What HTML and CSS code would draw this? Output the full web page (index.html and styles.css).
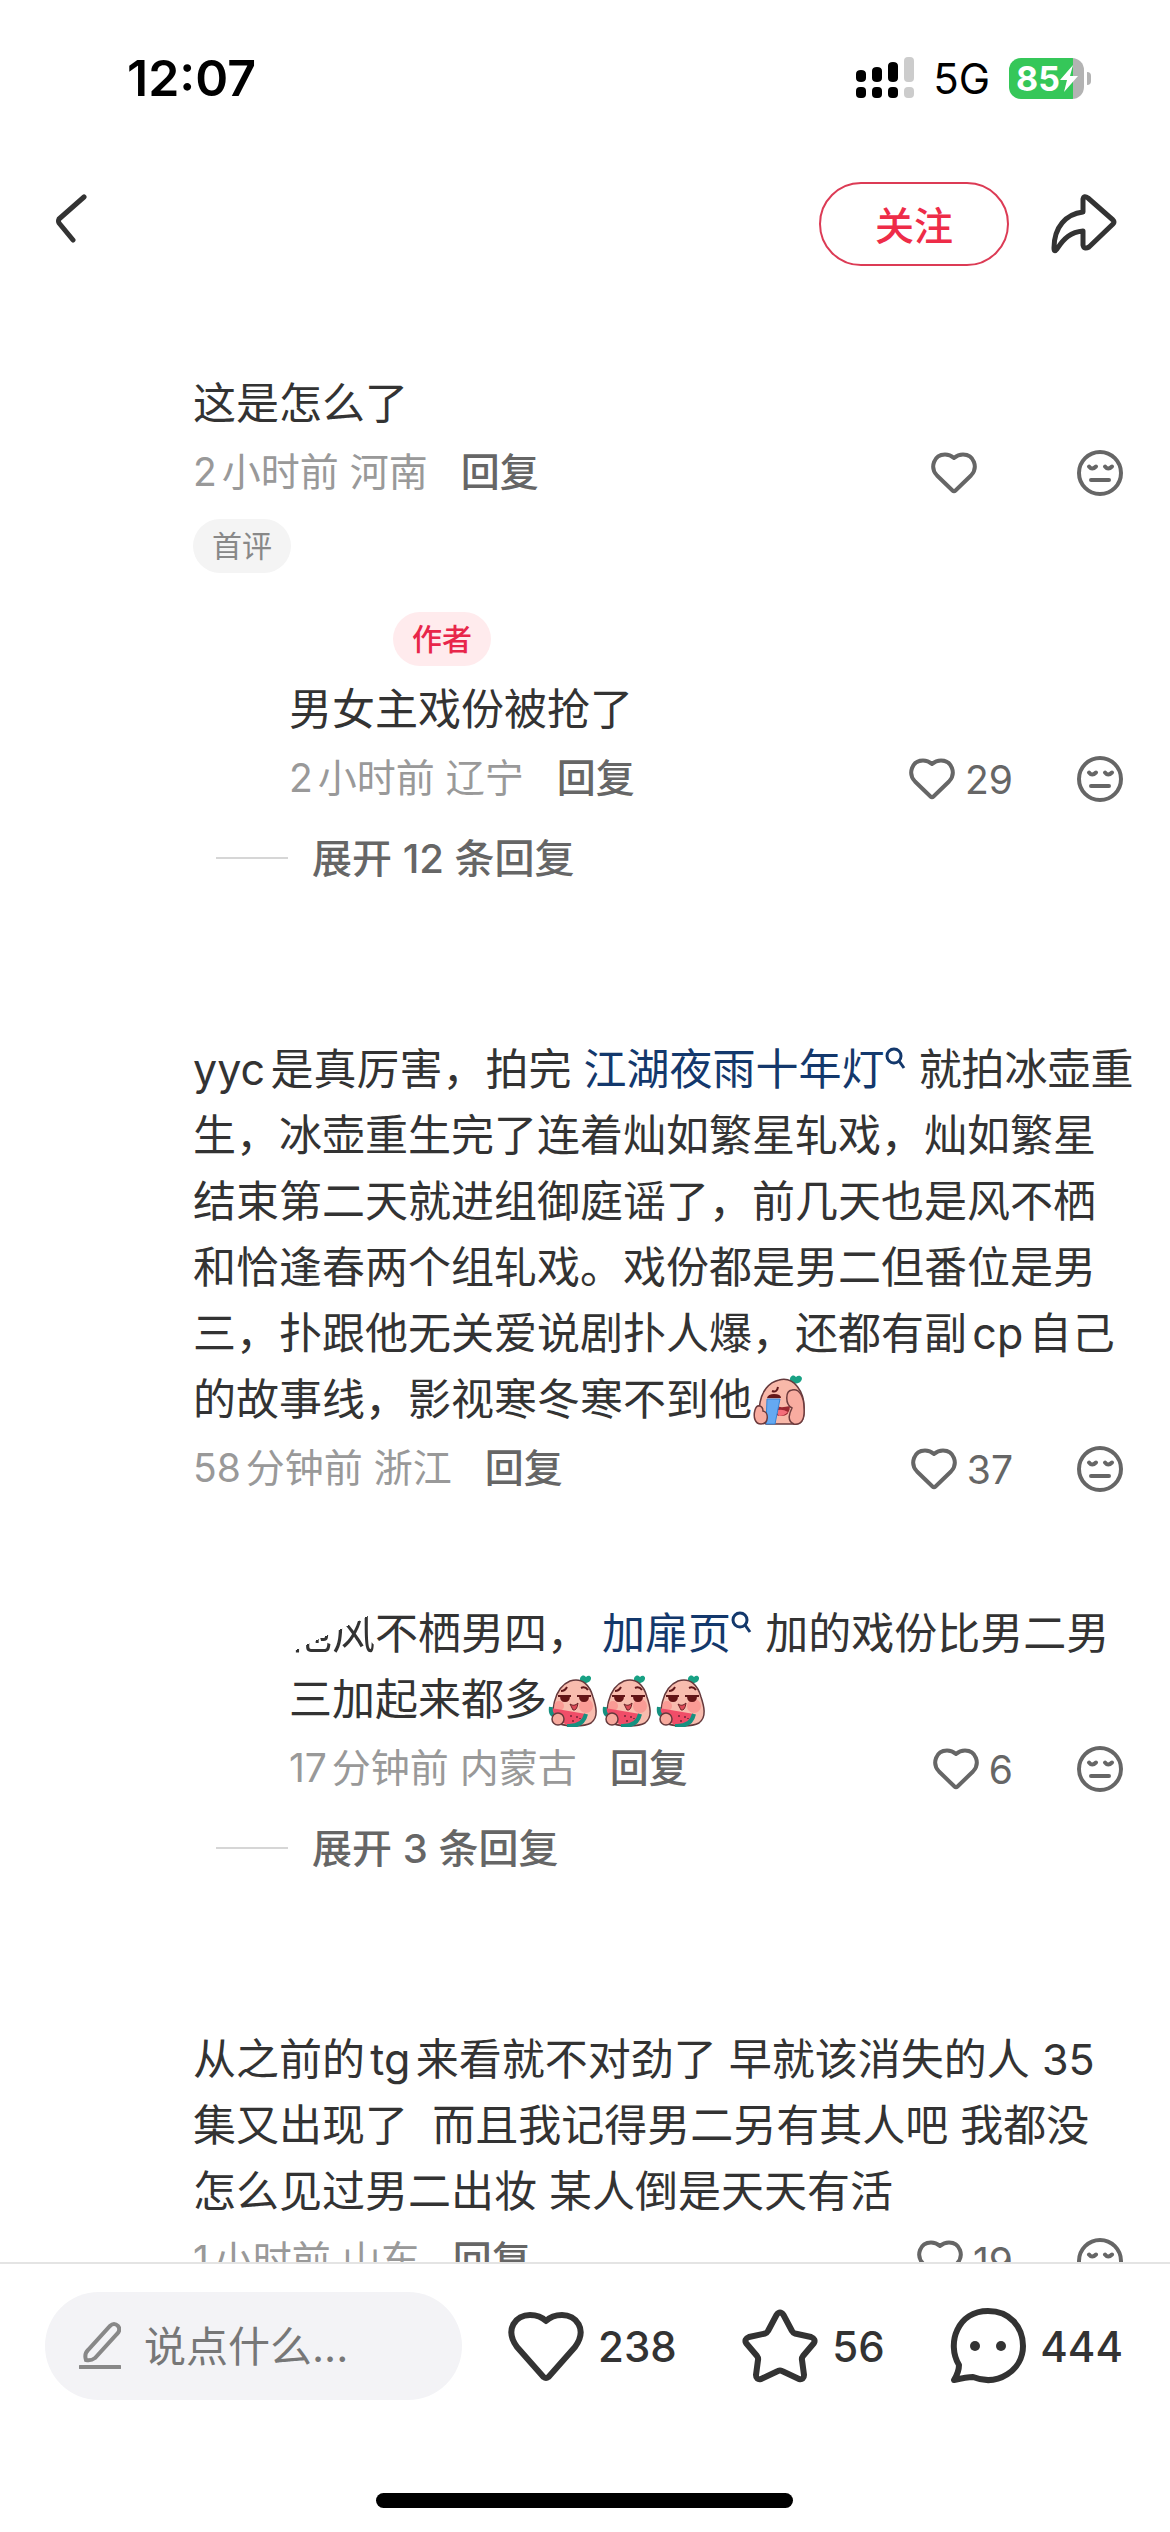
FILE: index.html
```html
<!DOCTYPE html>
<html lang="zh-CN">
<head>
<meta charset="utf-8">
<meta name="viewport" content="width=device-width, initial-scale=1">
<title>评论</title>
<link rel="stylesheet" href="styles.css">
</head>
<body>
<svg class="sprite" aria-hidden="true">
  <symbol id="heart" viewBox="0 0 46 42"><path d="M21.500 38.500 L6 23.500 C-1.500 15.500 3 2.500 14 2.500 C17.500 2.500 20.500 3.800 23 6 C25.500 3.800 28.500 2.500 32 2.500 C43 2.500 47.500 15.500 40 23.500 L24.500 38.500 Q23 40 21.500 38.500 Z"/></symbol>
  <symbol id="face" viewBox="0 0 46 46"><circle cx="23" cy="23" r="21"/><path d="M12 16.500 Q15 20.500 19 16.500 M28 16.500 Q31 20.500 35 16.500 M14 30 H32"/></symbol>
  <symbol id="search" viewBox="0 0 22 24"><circle cx="9" cy="9" r="7"/><path d="M14 14 L19 21"/></symbol>
  <symbol id="melon" viewBox="0 0 50 54">
    <path d="M31 9 C30 2 35 1 37 4 C40 1 44 4 41 8 C38 11 34 10 31 9Z" fill="#18a184"/>
    <path d="M21 8 C34 4 41 13 44 24 C47 33 50 44 42 50 C35 54 15 54 7 49 C1 43 4 15 21 8Z" fill="#f8bcae" stroke="#65393c" stroke-width="1.500"/>
    <circle cx="37" cy="33" r="7" fill="#fb8583" opacity=".6"/><circle cx="10" cy="33" r="5" fill="#fb8583" opacity=".6"/>
    <path d="M12 18 Q16 18 18 14 M32 15 Q36 13 39 17 M9 23 H22 M28 23 H42" fill="none" stroke="#60171a" stroke-width="2"/>
    <path d="M11 23 H21 Q21 29 16 29 Q11 29 11 23 M30 23 H40 Q40 29 35 29 Q30 29 30 23" fill="#641416"/>
    <path d="M21 31 Q25 34 29 30 Q28 38 24 37Z" fill="#dd4957" stroke="#6d2529"/>
    <path d="M2 35 L37 41 Q34 54 18 52 L3 43Z" fill="#f04d68"/>
    <path d="M37 41 Q34 54 18 53 M2 34 Q1 40 4 42" fill="none" stroke="#159180" stroke-width="4"/>
    <path d="M22 42 v2 M28 43 v2 M24 47 v2 M31 45 v1" stroke="#742536" stroke-width="1.500"/>
    <circle cx="9" cy="46" r="6" fill="#f7a99d" stroke="#65393c" stroke-width="1.500"/>
  </symbol>
  <symbol id="crying" viewBox="0 0 54 54">
    <path d="M38 9 C37 2 42 1 44 4 C47 1 52 4 49 8 C46 12 42 10 38 9Z" fill="#18a184"/>
    <path d="M27 7 C42 3 53 19 52 37 C52 48 49 52 41 51 L14 51 C3 46 5 12 27 7Z" fill="#f8b8a9" stroke="#65393c" stroke-width="1.500"/>
    <path d="M20 18 Q25 20 26 14" fill="none" stroke="#60171a" stroke-width="2"/>
    <path d="M17 31 Q27 36 38 33 Q38 43 29 43 Q23 43 20 37Z" fill="#9b2730"/><path d="M24 38 Q29 35 36 39 Q32 43 27 43Z" fill="#f46d7a"/>
    <path d="M15 26 H28 L23 51 H14Z" fill="#65a9f2" stroke="#3784d4"/>
    <path d="M15 25 Q16 21 22 21 Q29 21 29 25Z" fill="#651719"/>
    <path d="M42 51 C34 48 38 39 40 35 C33 31 33 18 40 17 C48 15 52 25 52 35 C53 47 49 52 42 51Z M3 37 C5 30 11 33 11 38 C17 39 17 51 9 51 C3 51 1 44 3 37Z" fill="#f8aca0" stroke="#6d3b3d" stroke-width="1.500"/>
  </symbol>
</svg>
<div class="app">
  <div class="status">
    <time class="clock">12:07</time>
    <div class="signals">
      <svg class="signal" viewBox="0 0 58 42" aria-hidden="true"><path d="M0 17q0-4 5-4t5 4v4q0 4-5 4t-5-4zM16 14q0-4 5-4t5 4v7q0 4-5 4t-5-4zM32 9q0-4 5-4t5 4v12q0 4-5 4t-5-4z"/><rect y="30" width="10" height="11" rx="4"/><rect x="16" y="30" width="10" height="11" rx="4"/><rect x="32" y="30" width="10" height="11" rx="4"/><g fill="#ccc"><rect x="48" width="10" height="25" rx="4"/><rect x="48" y="30" width="10" height="11" rx="4"/></g></svg>
      <span class="network">5G</span>
      <div class="battery"><span>85</span><svg class="bolt" viewBox="0 0 18 27" aria-hidden="true"><path d="M13 0 L0 15 H7 L4 27 L18 11 H10Z"/></svg></div>
    </div>
  </div>
  <header class="topbar">
    <button class="icon-button" aria-label="返回"><svg class="back" viewBox="0 0 32 49"><path d="M29 3 L4 25 Q3 27 4 29 L18 46"/></svg></button>
    <div class="top-actions">
      <button class="follow">关注</button>
      <button class="icon-button" aria-label="分享"><svg class="share" viewBox="0 0 66 60"><path d="M37 4 L62 26 Q64 28 62 30 L38 53 Q33 56 32 51 V37 C20 38 13 44 6 55 Q3 59 3 54 C3 33 15 20 32 18 V5 Q33 1 37 4Z"/></svg></button>
    </div>
  </header>
  <main class="comments">
    <article class="comment">
      <p class="text">这是怎么了</p>
      <div class="meta"><span>2小时前 河南</span><button class="reply">回复</button><div class="acts"><button class="like empty" aria-label="点赞"><svg class="heart"><use href="#heart"/></svg></button><button class="dislike" aria-label="不喜欢"><svg class="face"><use href="#face"/></svg></button></div></div>
      <span class="tag">首评</span>
      <div class="child">
        <span class="tag author">作者</span>
        <p class="text">男女主戏份被抢了</p>
        <div class="meta"><span>2小时前 辽宁</span><button class="reply">回复</button><div class="acts"><button class="like" aria-label="点赞"><svg class="heart"><use href="#heart"/></svg>29</button><button class="dislike" aria-label="不喜欢"><svg class="face"><use href="#face"/></svg></button></div></div>
      </div>
      <button class="expand">展开 12 条回复</button>
    </article>
    <article class="comment">
      <p class="text">yyc是真厉害，拍完 <a href="#">江湖夜雨十年灯<svg class="search"><use href="#search"/></svg></a> 就拍冰壶重<br>生，冰壶重生完了连着灿如繁星轧戏，灿如繁星<br>结束第二天就进组御庭谣了，前几天也是风不栖<br>和恰逢春两个组轧戏。戏份都是男二但番位是男<br>三，扑跟他无关爱说剧扑人爆，还都有副cp自己<br>的故事线，影视寒冬寒不到他<svg class="emoji"><use href="#crying"/></svg></p>
      <div class="meta"><span>58分钟前 浙江</span><button class="reply">回复</button><div class="acts"><button class="like" aria-label="点赞"><svg class="heart"><use href="#heart"/></svg>37</button><button class="dislike" aria-label="不喜欢"><svg class="face"><use href="#face"/></svg></button></div></div>
      <div class="child second">
        <p class="text"><span class="erased">他风</span>不栖男四， <a href="#">加扉页<svg class="search"><use href="#search"/></svg></a> 加的戏份比男二男<br>三加起来都多<svg class="emoji"><use href="#melon"/></svg><svg class="emoji"><use href="#melon"/></svg><svg class="emoji"><use href="#melon"/></svg></p>
        <div class="meta"><span>17分钟前 内蒙古</span><button class="reply">回复</button><div class="acts"><button class="like" aria-label="点赞"><svg class="heart"><use href="#heart"/></svg>6</button><button class="dislike" aria-label="不喜欢"><svg class="face"><use href="#face"/></svg></button></div></div>
      </div>
      <button class="expand">展开 3 条回复</button>
    </article>
    <article class="comment">
      <p class="text">从之前的tg来看就不对劲了 早就该消失的人 35<br>集又出现了&nbsp; 而且我记得男二另有其人吧 我都没<br>怎么见过男二出妆 某人倒是天天有活</p>
      <div class="meta"><span>1小时前 山东</span><button class="reply">回复</button><div class="acts"><button class="like" aria-label="点赞"><svg class="heart"><use href="#heart"/></svg>19</button><button class="dislike" aria-label="不喜欢"><svg class="face"><use href="#face"/></svg></button></div></div>
    </article>
  </main>
  <footer class="bottom">
    <div class="tools">
      <label class="field"><svg class="pencil" viewBox="0 0 42 48" aria-hidden="true"><path d="M31 4 Q35 0 39 4 Q42 8 38 12 L16 36 Q12 39 7 38 Q5 32 9 28Z"/><path d="M1 45 H41"/></svg><input type="text" placeholder="说点什么..." aria-label="说点什么"></label>
      <div class="stats">
        <button class="stat"><svg viewBox="0 0 76 74"><path d="M35.500 68 L9 38 C-4 20 8 6 22 6 C29 6 34 8 38 12 C42 8 47 6 54 6 C68 6 80 20 67 38 L40.500 68 Q38 70 35.500 68 Z"/></svg>238</button>
        <button class="stat"><svg viewBox="0 0 76 74"><path d="M34.500 6 Q38 1 41.500 6 L50 22 Q51 24 53 24.500 L69 28 Q74 30 72 34 L61 47 Q59.500 49 60 51 L62 66 Q62 71 57 70 L40 62 Q38 61 36 62 L19 70 Q14 71 14 66 L16 51 Q16.500 49 15 47 L4 34 Q2 30 7 28 L23 24.500 Q25 24 26 22 Z"/></svg>56</button>
        <button class="stat"><svg viewBox="0 0 76 76"><path d="M9 57 C-4 35 8 3 38 3 C60 3 73 19 73 38 C73 62 48 79 23 69 Q17 69 4 72 Q9 64 9 57Z"/><circle class="eye" cx="25" cy="38" r="5"/><circle class="eye" cx="51" cy="38" r="5"/></svg>444</button>
      </div>
    </div>
    <div class="home"></div>
  </footer>
</div>
</body>
</html>
```
FILE: styles.css
```css
* { box-sizing: border-box; }
body { margin: 0; background: #fff; color: #333; font-family: Inter, "Noto Sans CJK SC", sans-serif; text-autospace: normal; }
button, input { font: inherit; color: inherit; border: 0; background: none; padding: 0; margin: 0; }
svg { display: block; flex: none; fill: none; }
p { margin: 0; }
a { color: #13386c; text-decoration: none; }
.sprite { position: absolute; width: 0; height: 0; }
.app { height: 100vh; display: flex; flex-direction: column; overflow: hidden; }

.status { flex: none; height: 156px; padding: 0 79px 0 127px; display: flex; align-items: center; justify-content: space-between; color: #000; }
.clock { font-size: 50px; font-weight: 600; }
.signals { display: flex; align-items: center; gap: 19px; }
.signal { width: 58px; height: 42px; fill: #000; }
.network { font-size: 42px; }
.battery { position: relative; width: 75px; height: 41px; margin-right: 7px; border-radius: 12px; background: linear-gradient(90deg, #35c759 64px, #b3b3b3 64px); color: #fff; font-size: 34px; font-weight: 700; display: flex; align-items: center; padding-left: 7px; }
.battery::after { content: ""; position: absolute; left: 78px; top: 14px; width: 4px; height: 13px; border-radius: 0 4px 4px 0; background: #b3b3b3; }
.bolt { width: 18px; height: 27px; fill: #fff; }

.topbar { flex: none; height: 136px; padding: 0 53px 0 55px; display: flex; align-items: center; justify-content: space-between; }
.top-actions { display: flex; align-items: center; gap: 42px; }
.back { width: 32px; height: 49px; margin-bottom: 12px; stroke: #333; stroke-width: 5; stroke-linecap: round; stroke-linejoin: round; }
.share { width: 66px; height: 60px; stroke: #333; stroke-width: 5; stroke-linejoin: round; }
.follow { width: 190px; height: 84px; padding-bottom: 2px; border: 2px solid #dc3b55; border-radius: 42px; color: #ee2c48; font-size: 39px; font-weight: 500; }

.comments { flex: 1; min-height: 0; overflow: hidden; padding: 78px 47px 0 193px; display: flex; flex-direction: column; gap: 152px; }
.comment { flex: none; }
.text { font-size: 43px; line-height: 66px; white-space: nowrap; }
.meta { display: flex; align-items: center; height: 50px; margin-top: 8px; font-size: 39px; color: #999; }
.reply { margin-left: 33px; color: #666; font-weight: 500; }
.acts { margin-left: auto; padding-top: 8px; display: flex; align-items: center; gap: 64px; color: #666; }
.like { display: flex; align-items: center; gap: 10px; }
.like.empty { margin-right: 36px; }
.heart { width: 46px; height: 42px; stroke: #666; stroke-width: 4; stroke-linejoin: round; }
.face { width: 46px; height: 46px; stroke: #666; stroke-width: 4; stroke-linecap: round; }
.tag { display: block; width: 98px; height: 54px; margin-top: 25px; border-radius: 27px; background: #f4f4f4; color: #888; font-size: 30px; line-height: 54px; text-align: center; }
.child { margin: 39px 0 0 96px; }
.author { margin: 0 0 10px 104px; background: #ffebed; color: #e8264a; font-weight: 500; }
.expand { display: flex; align-items: center; gap: 24px; height: 56px; margin: 28px 0 0 23px; color: #666; font-size: 40px; font-weight: 500; }
.expand::before { content: ""; width: 72px; height: 2px; margin-top: 4px; background: #d6d6d6; }
.search { display: inline-block; width: 22px; height: 24px; vertical-align: 14px; stroke: #13386c; stroke-width: 3; }
.emoji { display: inline-block; width: 54px; height: 54px; vertical-align: -12px; }
.second { margin-top: 110px; }
.erased { background: linear-gradient(155deg, transparent 50%, #333 50%); background-clip: text; color: transparent; }

.bottom { flex: none; height: 270px; border-top: 2px solid #e4e4e4; display: flex; flex-direction: column; justify-content: space-between; align-items: center; padding: 28px 47px 24px 45px; }
.tools { width: 100%; display: flex; align-items: center; gap: 46px; }
.field { flex: none; width: 417px; height: 108px; border-radius: 54px; background: #f3f3f6; display: flex; align-items: center; gap: 23px; padding: 0 34px; }
.field input { flex: 1; min-width: 0; font-size: 42px; outline: 0; text-autospace: no-autospace; }
.field input::placeholder { color: #777; opacity: 1; }
.pencil { width: 42px; height: 48px; stroke: #888; stroke-width: 4; stroke-linecap: round; }
.stats { flex: 1; display: flex; align-items: center; justify-content: space-between; }
.stat { display: flex; align-items: center; gap: 14px; font-size: 42px; font-weight: 500; }
.stat svg { width: 76px; height: 76px; stroke: #333; stroke-width: 6; stroke-linejoin: round; }
.stat .eye { fill: #333; stroke: none; }
.home { width: 417px; height: 15px; border-radius: 8px; background: #000; }
```
